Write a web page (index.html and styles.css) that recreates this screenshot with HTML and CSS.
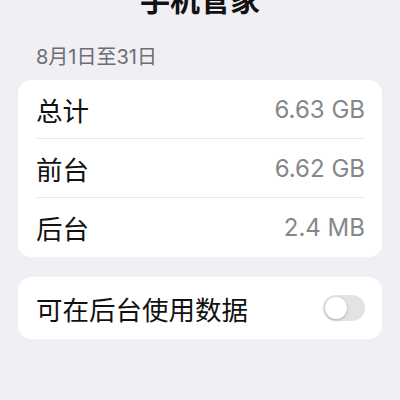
FILE: index.html
```html
<!DOCTYPE html>
<html lang="zh-CN">
<head>
<meta charset="utf-8">
<link rel="stylesheet" href="styles.css">
</head>
<body>
<div class="page">
  <div class="title">手机管家</div>
  <div class="section-label">8月1日至31日</div>
  <div class="card">
    <div class="row"><span class="label">总计</span><span class="value">6.63 GB</span></div>
    <div class="row"><span class="label">前台</span><span class="value">6.62 GB</span></div>
    <div class="row"><span class="label">后台</span><span class="value">2.4 MB</span></div>
  </div>
  <div class="card card-toggle">
    <div class="row"><span class="label">可在后台使用数据</span><span class="switch"><span class="knob"></span></span></div>
  </div>
</div>
</body>
</html>
```

FILE: styles.css
```css
html, body {
  margin: 0;
  padding: 0;
  background: #efeff4;
  font-family: "Inter", "Noto Sans CJK SC", sans-serif;
  overflow: hidden;
}
.page {
  width: 400px;
  height: 400px;
  padding: 0 18px;
  box-sizing: border-box;
}
.title {
  margin-top: -15px;
  height: 30px;
  line-height: 30px;
  font-size: 30px;
  font-weight: 700;
  text-align: center;
  color: #111;
}
.section-label {
  margin-top: 30px;
  padding-left: 18px;
  height: 24px;
  line-height: 24px;
  font-size: 20px;
  color: #6d6d72;
}
.card {
  margin-top: 11px;
  background: #fff;
  border-radius: 13px;
}
.row {
  display: flex;
  justify-content: space-between;
  align-items: center;
  height: 59px;
  margin: 0 17px 0 18px;
  border-bottom: 1px solid #e6e6eb;
  box-sizing: border-box;
}
.row:last-child {
  border-bottom: none;
}
.label {
  font-size: 26.5px;
  color: #111;
}
.value {
  font-size: 24px;
  color: #86868b;
}
.card-toggle {
  margin-top: 20px;
}
.card-toggle .row {
  height: 62px;
}
.switch {
  width: 42px;
  height: 26px;
  border-radius: 13px;
  background: #e3e3e6;
  position: relative;
  display: block;
}
.knob {
  position: absolute;
  left: 2px;
  top: 2px;
  width: 22px;
  height: 22px;
  border-radius: 50%;
  background: #fff;
  box-shadow: 0 1px 3px rgba(0,0,0,0.25);
}
```
